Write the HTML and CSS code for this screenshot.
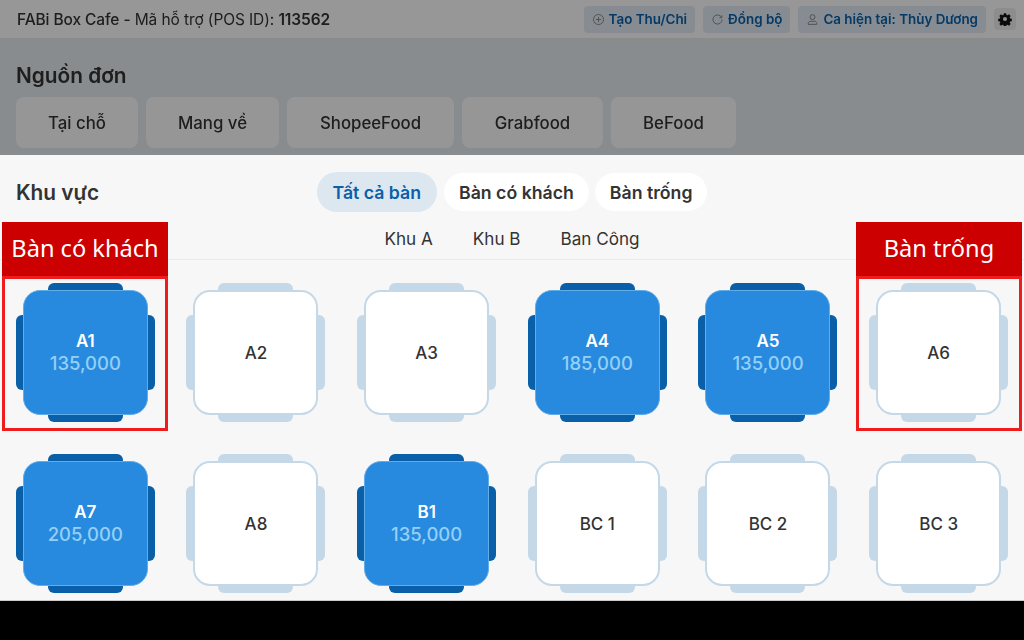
FILE: index.html
```html
<!DOCTYPE html>
<html lang="vi">
<head>
  <meta charset="UTF-8">
  <title>FABi Box Cafe</title>
  <link rel="stylesheet" href="styles.css">
</head>
<body>
  <div class="app">
    <div class="top">
      <header class="topbar">
        <div class="shop"><b>FABi Box Cafe -</b> Mã hỗ trợ (POS ID): <b class="pos-id">113562</b></div>
        <div class="actions">
          <button class="action">
            <svg viewBox="0 0 16 16" class="ic"><circle cx="8" cy="8" r="6.2"/><path d="M8 4.8v6.4M4.8 8h6.4"/></svg>
            Tạo Thu/Chi
          </button>
          <button class="action">
            <svg viewBox="0 0 16 16" class="ic"><path d="M13 5.5A5.6 5.6 0 1 0 13.6 8"/><path d="M13.4 2.8v3h-3"/></svg>
            Đồng bộ
          </button>
          <button class="action">
            <svg viewBox="0 0 16 16" class="ic"><circle cx="8" cy="5" r="3"/><path d="M2.8 14v-1.2c0-1.5 1.2-2.6 2.6-2.6h5.2c1.4 0 2.6 1.1 2.6 2.6V14z"/></svg>
            Ca hiện tại: Thùy Dương
          </button>
          <button class="gear">
            <svg viewBox="0 0 24 24"><path d="M10 2h4l.6 3 1.7.7 2.6-1.7 2.8 2.8-1.7 2.6.7 1.7 3 .6v4l-3 .6-.7 1.7 1.7 2.6-2.8 2.8-2.6-1.7-1.7.7-.6 3h-4l-.6-3-1.7-.7-2.6 1.7-2.8-2.8 1.7-2.6-.7-1.7-3-.6v-4l3-.6.7-1.7-1.7-2.6 2.8-2.8 2.6 1.7 1.7-.7zM12 8.5a3.5 3.5 0 1 0 0 7 3.5 3.5 0 0 0 0-7z" fill-rule="evenodd"/></svg>
          </button>
        </div>
      </header>
      <section class="source">
        <h2>Nguồn đơn</h2>
        <div class="source-list">
          <button class="source-btn">Tại chỗ</button>
          <button class="source-btn">Mang về</button>
          <button class="source-btn">ShopeeFood</button>
          <button class="source-btn">Grabfood</button>
          <button class="source-btn">BeFood</button>
        </div>
      </section>
      <div class="dim"></div>
    </div>

    <main class="sheet">
      <div class="sheet-head">
        <h2>Khu vực</h2>
        <div class="pills">
          <button class="pill active">Tất cả bàn</button>
          <button class="pill">Bàn có khách</button>
          <button class="pill">Bàn trống</button>
        </div>
      </div>
      <nav class="areas">
        <span>Khu A</span>
        <span>Khu B</span>
        <span>Ban Công</span>
      </nav>
      <div class="tables">
        <div class="cell"><div class="table busy"><div class="top-face"><b>A1</b><span>135,000</span></div></div></div>
        <div class="cell"><div class="table"><div class="top-face"><b>A2</b></div></div></div>
        <div class="cell"><div class="table"><div class="top-face"><b>A3</b></div></div></div>
        <div class="cell"><div class="table busy"><div class="top-face"><b>A4</b><span>185,000</span></div></div></div>
        <div class="cell"><div class="table busy"><div class="top-face"><b>A5</b><span>135,000</span></div></div></div>
        <div class="cell"><div class="table"><div class="top-face"><b>A6</b></div></div></div>
        <div class="cell"><div class="table busy"><div class="top-face"><b>A7</b><span>205,000</span></div></div></div>
        <div class="cell"><div class="table"><div class="top-face"><b>A8</b></div></div></div>
        <div class="cell"><div class="table busy"><div class="top-face"><b>B1</b><span>135,000</span></div></div></div>
        <div class="cell"><div class="table"><div class="top-face"><b>BC 1</b></div></div></div>
        <div class="cell"><div class="table"><div class="top-face"><b>BC 2</b></div></div></div>
        <div class="cell"><div class="table"><div class="top-face"><b>BC 3</b></div></div></div>
      </div>
    </main>

    <div class="note note-left"><div class="note-label">Bàn có khách</div><div class="note-box"></div></div>
    <div class="note note-right"><div class="note-label">Bàn trống</div><div class="note-box"></div></div>
  </div>
</body>
</html>
```

FILE: styles.css
```css
:root {
  --blue: #278ade;
  --blue-dark: #0a60a8;
  --blue-line: #c5d8e8;
  --text: #333;
  --red: #cc0000;
  --red-line: #ee1c1c;
}
* {
  box-sizing: border-box;
}
html, body {
  margin: 0;
  height: 100%;
  overflow: hidden;
  background: #000;
}
body {
  font-family: 'Inter', Arial, sans-serif;
  color: var(--text);
}
button {
  font-family: inherit;
  border: none;
  padding: 0;
}
h2 {
  margin: 0;
  font-size: 20.8px;
  font-weight: 600;
  line-height: 24px;
}
.app {
  position: relative;
  height: 601px;
  overflow: hidden;
  background: #f7f7f7;
  border-bottom: 1px solid #ccc;
}

/* partie haute, assombrie */
.top {
  position: relative;
  height: 155px;
  background: #e3e9ee;
}
.dim {
  position: absolute;
  inset: 0;
  background: rgba(0, 0, 0, .4);
}
.topbar {
  display: flex;
  justify-content: space-between;
  align-items: center;
  height: 39px;
  padding: 0 8px 0 17px;
  background: #fcfcfc;
  border-bottom: 1px solid #e6e6e6;
}
.shop {
  font-size: 15.5px;
  letter-spacing: -.1px;
  filter: blur(.3px);
}
.shop b {
  font-weight: 500;
}
.shop .pos-id {
  font-weight: 600;
}
.actions {
  display: flex;
  align-items: center;
  gap: 8px;
  filter: blur(.3px);
}
.action {
  display: flex;
  align-items: center;
  gap: 4px;
  height: 27px;
  padding: 0 8px;
  border-radius: 4px;
  background: #dfe9f2;
  color: #0a60a8;
  font-size: 13.4px;
  font-weight: 600;
}
.ic {
  width: 13px;
  height: 13px;
  fill: none;
  stroke: #888;
  stroke-width: 1.2;
}
.gear {
  display: flex;
  align-items: center;
  justify-content: center;
  width: 22px;
  height: 22px;
  border-radius: 4px;
  background: #ececec;
}
.gear svg {
  width: 14px;
  height: 14px;
  fill: #111;
}
.source {
  padding: 25px 16px 0;
  filter: blur(.3px);
}
.source-list {
  display: flex;
  gap: 8px;
  margin-top: 9px;
}
.source-btn {
  height: 51px;
  padding: 0 20px;
  border-radius: 8px;
  background: #fbfbfb;
  color: var(--text);
  font-size: 16.8px;
  font-weight: 500;
}
.source-btn:nth-child(1) { width: 122px; }
.source-btn:nth-child(2) { width: 133px; }
.source-btn:nth-child(3) { width: 167px; }
.source-btn:nth-child(4) { width: 141px; }
.source-btn:nth-child(5) { width: 125px; }

/* panneau des tables */
.sheet-head {
  display: grid;
  grid-template-columns: 1fr auto 1fr;
  align-items: center;
  padding: 17px 16px 0;
}
.sheet-head h2 {
  padding-top: 2px;
}
.pills {
  display: flex;
  gap: 6px;
}
.pill {
  height: 38px;
  margin-top: 1px;
  padding: 0 15px;
  border-radius: 20px;
  background: #fff;
  color: var(--text);
  font-size: 17.7px;
  font-weight: 600;
}
.pill.active {
  height: 40px;
  margin-top: 0;
  margin-right: 1px;
  padding: 0 16px;
  background: #dde7f0;
  color: var(--blue-dark);
}
.areas {
  display: flex;
  justify-content: center;
  gap: 40px;
  height: 48px;
  padding-top: 17px;
  border-bottom: 1px solid #eaeaea;
  font-size: 17.1px;
  line-height: 20px;
}
.tables {
  display: grid;
  grid-template-columns: repeat(6, 1fr);
  grid-auto-rows: 171px;
  padding-top: 7px;
}
.cell {
  display: flex;
  align-items: center;
  justify-content: center;
}
.table {
  position: relative;
  width: 139px;
  height: 139px;
}
.table::before,
.table::after {
  content: '';
  position: absolute;
  background: var(--blue-line);
  border-radius: 6px;
}
.table::before {
  left: 32px;
  top: 0;
  width: 75px;
  height: 139px;
}
.table::after {
  left: 0;
  top: 32px;
  width: 139px;
  height: 75px;
}
.top-face {
  position: absolute;
  z-index: 1;
  inset: 7px;
  display: flex;
  flex-direction: column;
  align-items: center;
  justify-content: center;
  background: #fff;
  border: 2px solid var(--blue-line);
  border-radius: 17px;
  font-size: 17px;
}
.top-face b {
  font-weight: 500;
  line-height: 22px;
}
.top-face span {
  font-size: 18.5px;
  line-height: 23px;
  font-weight: 500;
}
.busy::before,
.busy::after {
  background: var(--blue-dark);
}
.busy .top-face {
  background: var(--blue);
  border: 1px solid #62ace8;
  color: #fff;
}
.busy .top-face b {
  font-weight: 600;
}
.busy .top-face span {
  color: #93d0f8;
}

/* annotations rouges par-dessus la capture */
.note {
  position: absolute;
  z-index: 2;
  top: 222px;
  width: 166px;
}
.note-left {
  left: 2px;
}
.note-right {
  left: 856px;
}
.note-label {
  height: 54px;
  background: var(--red);
  color: #fff;
  font-family: 'Noto Sans', Arial, sans-serif;
  font-size: 23.6px;
  line-height: 52px;
  text-align: center;
}
.note-box {
  height: 155px;
  border: 3px solid var(--red-line);
}
```
